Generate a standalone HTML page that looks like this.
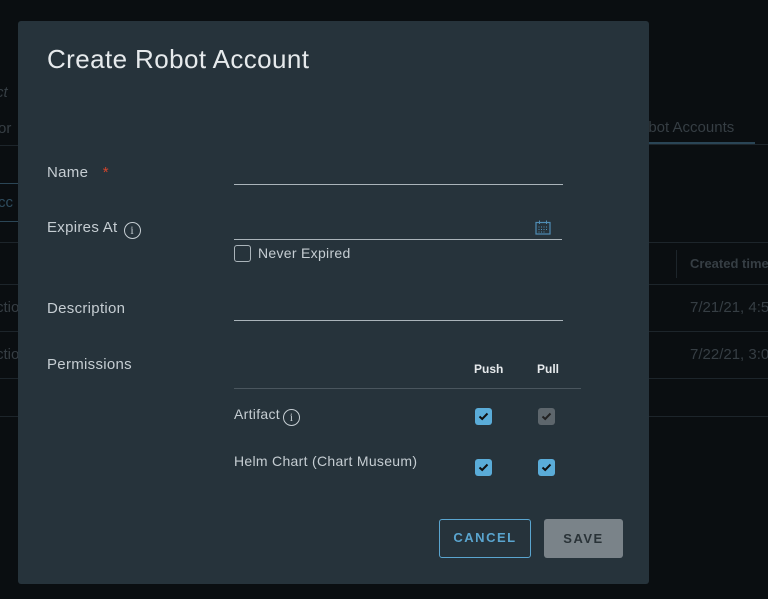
<!DOCTYPE html>
<html><head><style>
*{margin:0;padding:0;box-sizing:border-box}
body{width:768px;height:599px;background:#0a0e11;font-family:"Liberation Sans",sans-serif;position:relative;overflow:hidden;color:#c8cfd3}
.a{position:absolute;white-space:nowrap}
.bg{color:#363e44;font-size:15px}
.hl{position:absolute;height:1px;background:#1d252b}
.dlg{position:absolute;left:18px;top:21px;width:631px;height:563px;background:#26333b;border-radius:3px}
.lbl{position:absolute;font-size:15px;color:#c5cdd2;white-space:nowrap;letter-spacing:0.3px}
.ul{position:absolute;height:1px;background:#aab4ba}
.cb{position:absolute;width:17px;height:17px;border-radius:3px;background:#5aacd8}
.cb svg{position:absolute;left:3px;top:4px}
.info{display:inline-block;width:17px;height:17px;border:1.5px solid #c5cdd2;border-radius:50%;font-size:12px;text-align:center;line-height:14px;font-family:"Liberation Serif",serif;vertical-align:-2px;margin-left:6px;letter-spacing:0}
</style></head><body>
<div class="a bg" style="left:-4px;top:84px;font-style:italic">ct</div>
<div class="a bg" style="left:-2px;top:120px">or</div>
<div class="hl" style="left:0;top:145px;width:18px"></div>
<div class="a" style="left:0;top:183px;width:18px;height:1px;background:#2b4656"></div>
<div class="a" style="left:-2px;top:194px;color:#2e4c5e;font-size:15px">cc</div>
<div class="a" style="left:0;top:221px;width:18px;height:1px;background:#2b4656"></div>
<div class="hl" style="left:0;top:242px;width:768px"></div>
<div class="a bg" style="left:-4px;top:299px">ctio</div>
<div class="a bg" style="left:-4px;top:346px">ctio</div>
<div class="a bg" style="left:640px;top:119px;font-size:15px">obot Accounts</div>
<div class="a" style="left:649px;top:142px;width:106px;height:3px;background:#2a4556"></div>
<div class="hl" style="left:649px;top:144px;width:119px"></div>
<div class="a" style="left:676px;top:250px;width:1px;height:28px;background:#1d252b"></div>
<div class="a bg" style="left:690px;top:256px;font-size:13px;font-weight:bold">Created time</div>
<div class="hl" style="left:0;top:284px;width:768px"></div>
<div class="a bg" style="left:690px;top:299px">7/21/21, 4:5</div>
<div class="hl" style="left:0;top:331px;width:768px"></div>
<div class="a bg" style="left:690px;top:346px">7/22/21, 3:0</div>
<div class="hl" style="left:0;top:378px;width:768px"></div>
<div class="hl" style="left:0;top:416px;width:768px"></div>

<div class="dlg"></div>
<div class="a" style="left:47px;top:44px;font-size:26px;color:#e6eaec;letter-spacing:0.4px">Create Robot Account</div>
<div class="lbl" style="left:47px;top:164px">Name <span style="color:#d4452c;margin-left:10px">*</span></div>
<div class="ul" style="left:234px;top:184px;width:329px"></div>
<div class="lbl" style="left:47px;top:219px">Expires At<span class="info">i</span></div>
<div class="ul" style="left:234px;top:239px;width:328px"></div>
<svg class="a" style="left:535px;top:220px" width="16" height="15" viewBox="0 0 16 15"><rect x="1" y="2.5" width="14" height="11.5" fill="none" stroke="#4f8db4" stroke-width="1.2"/><line x1="4.5" y1="0.5" x2="4.5" y2="4" stroke="#4f8db4"/><line x1="11.5" y1="0.5" x2="11.5" y2="4" stroke="#4f8db4"/><g fill="#4f8db4"><rect x="3.5" y="6.5" width="1" height="1"/><rect x="6" y="6.5" width="1" height="1"/><rect x="8.5" y="6.5" width="1" height="1"/><rect x="11" y="6.5" width="1" height="1"/><rect x="3.5" y="9" width="1" height="1"/><rect x="6" y="9" width="1" height="1"/><rect x="8.5" y="9" width="1" height="1"/><rect x="11" y="9" width="1" height="1"/><rect x="3.5" y="11.5" width="1" height="1"/><rect x="6" y="11.5" width="1" height="1"/><rect x="8.5" y="11.5" width="1" height="1"/></g></svg>
<div class="a" style="left:234px;top:245px;width:17px;height:17px;border:1.5px solid #aab4ba;border-radius:3px"></div>
<div class="lbl" style="left:258px;top:245px;font-size:14px">Never Expired</div>
<div class="lbl" style="left:47px;top:300px">Description</div>
<div class="ul" style="left:234px;top:320px;width:329px"></div>
<div class="lbl" style="left:47px;top:356px">Permissions</div>
<div class="a" style="left:474px;top:362px;font-size:12px;font-weight:bold;color:#e6eaec">Push</div>
<div class="a" style="left:537px;top:362px;font-size:12px;font-weight:bold;color:#e6eaec">Pull</div>
<div class="a" style="left:234px;top:388px;width:347px;height:1px;background:#4a565e"></div>
<div class="lbl" style="left:234px;top:406px;font-size:14px">Artifact<span class="info" style="margin-left:3px">i</span></div>
<div class="cb" style="left:475px;top:408px"><svg width="11" height="9"><path d="M1.5 4.5L4.2 7 9.5 1.5" fill="none" stroke="#111" stroke-width="2"/></svg></div>
<div class="cb" style="left:538px;top:408px;background:#5d666c"><svg width="11" height="9"><path d="M1.5 4.5L4.2 7 9.5 1.5" fill="none" stroke="#222" stroke-width="2"/></svg></div>
<div class="lbl" style="left:234px;top:453px;font-size:14px">Helm Chart (Chart Museum)</div>
<div class="cb" style="left:475px;top:459px"><svg width="11" height="9"><path d="M1.5 4.5L4.2 7 9.5 1.5" fill="none" stroke="#111" stroke-width="2"/></svg></div>
<div class="cb" style="left:538px;top:459px"><svg width="11" height="9"><path d="M1.5 4.5L4.2 7 9.5 1.5" fill="none" stroke="#111" stroke-width="2"/></svg></div>
<div class="a" style="left:439px;top:519px;width:92px;height:39px;border:1.5px solid #5aa5cf;border-radius:3px;color:#5aa5cf;font-size:13px;font-weight:bold;letter-spacing:1.5px;text-align:center;line-height:36px">CANCEL</div>
<div class="a" style="left:544px;top:519px;width:79px;height:39px;background:#7a8389;border-radius:3px;color:#2a3338;font-size:13px;font-weight:bold;letter-spacing:1.5px;text-align:center;line-height:39px">SAVE</div>
</body></html>
